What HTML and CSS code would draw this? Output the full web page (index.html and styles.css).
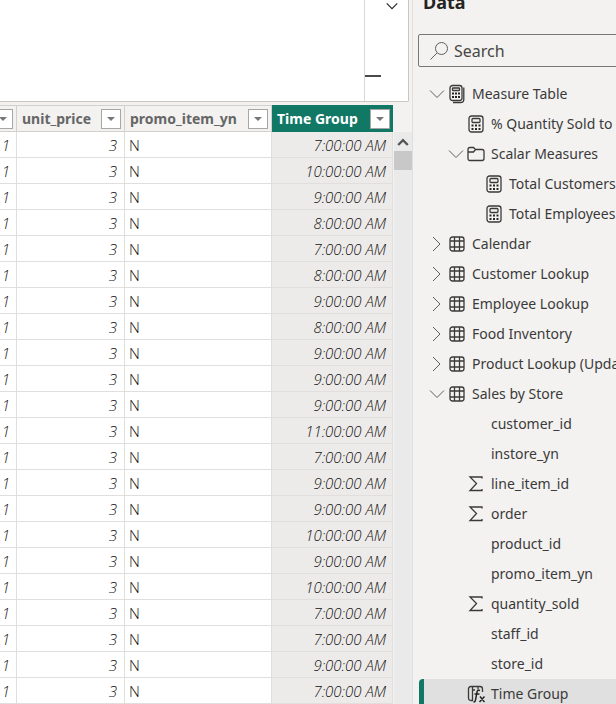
FILE: index.html
```html
<!DOCTYPE html>
<html lang="en">
<head>
<meta charset="utf-8">
<title>Table view</title>
<link rel="stylesheet" href="styles.css">
</head>
<body>
<svg class="defs" aria-hidden="true">
  <symbol id="down" viewBox="0 0 16 16"><path d="M1 4.500L8 11.500L15 4.500"/></symbol>
  <symbol id="right" viewBox="0 0 16 16"><path d="M4 1L11 8L4 15"/></symbol>
  <symbol id="table" viewBox="0 0 18 18"><rect x="2" y="2" width="14" height="14" rx="2.500"/><path d="M6.500 2V16M11.500 2V16M2 6H16M2 12H16"/></symbol>
  <symbol id="calc" viewBox="0 0 18 18"><rect x="2" y="1" width="14" height="16" rx="2.500"/><rect x="5" y="3.500" width="8" height="4" rx="1"/><path class="dots" d="M4.500 9.500h2v2h-2zM8 9.500h2v2H8zM11.500 9.500h2v2h-2zM4.500 13h2v2h-2zM8 13h2v2H8zM11.500 13h2v2h-2z"/></symbol>
  <symbol id="measures" viewBox="0 0 18 20"><rect x="2" y="1.500" width="12" height="15" rx="2.500"/><rect x="4.500" y="4" width="7" height="2.500" rx=".5"/><path class="dots" d="M4 8.500h2v2H4zM7 8.500h2v2H7zM10 8.500h2v2h-2zM4 12h2v2H4zM7 12h2v2H7zM10 12h2v2h-2z"/><path d="M15.800 3.500V15.500Q15.800 18.500 12.500 18.500H5"/></symbol>
  <symbol id="folder" viewBox="0 0 18 18"><path d="M1 4.500Q1 2.500 3 2.500H6.500L8.500 4.500H15Q17 4.500 17 6.500V13.500Q17 15.500 15 15.500H3Q1 15.500 1 13.500zM1 7H6.500L8.500 4.500"/></symbol>
  <symbol id="sum" viewBox="0 0 18 18"><path d="M15 3.500V2H3L9.500 8.500L3 15.500H15V14"/></symbol>
  <symbol id="column-fx" viewBox="0 0 18 18"><path d="M6 15.500H4Q1.500 15.500 1.500 13V4Q1.500 1.500 4 1.500H13Q15.500 1.500 15.500 4V7M5.500 1.500V15.500M11 1.500V4.500M5.500 5H8"/><path class="fx" d="M13 5.500Q10.500 4.500 10 7L8.500 15Q8.200 17.300 6.500 16.500M7.500 9H12.500M13 11.500L17.500 17M17.500 11.500L12.500 17"/></symbol>
</svg>
<div class="app">
  <main class="editor">
    <section class="formula">
      <textarea class="formula-input" aria-label="Formula"></textarea>
      <div class="formula-tools">
        <button class="expand" aria-label="Expand formula bar"><svg><use href="#down"/></svg></button>
        <span class="overview-mark"></span>
      </div>
    </section>
    <section class="grid">
      <table class="data">
        <colgroup><col class="c-first"><col class="c-price"><col class="c-promo"><col class="c-time"></colgroup>
        <thead><tr>
          <th><div class="head"><button aria-label="Filter column"></button></div></th>
          <th><div class="head"><span>unit_price</span><button aria-label="Filter unit_price"></button></div></th>
          <th><div class="head"><span>promo_item_yn</span><button aria-label="Filter promo_item_yn"></button></div></th>
          <th class="active"><div class="head"><span>Time Group</span><button aria-label="Filter Time Group"></button></div></th>
        </tr></thead>
        <tbody>
          <tr><td>1</td><td>3</td><td>N</td><td>7:00:00 AM</td></tr>
          <tr><td>1</td><td>3</td><td>N</td><td>10:00:00 AM</td></tr>
          <tr><td>1</td><td>3</td><td>N</td><td>9:00:00 AM</td></tr>
          <tr><td>1</td><td>3</td><td>N</td><td>8:00:00 AM</td></tr>
          <tr><td>1</td><td>3</td><td>N</td><td>7:00:00 AM</td></tr>
          <tr><td>1</td><td>3</td><td>N</td><td>8:00:00 AM</td></tr>
          <tr><td>1</td><td>3</td><td>N</td><td>9:00:00 AM</td></tr>
          <tr><td>1</td><td>3</td><td>N</td><td>8:00:00 AM</td></tr>
          <tr><td>1</td><td>3</td><td>N</td><td>9:00:00 AM</td></tr>
          <tr><td>1</td><td>3</td><td>N</td><td>9:00:00 AM</td></tr>
          <tr><td>1</td><td>3</td><td>N</td><td>9:00:00 AM</td></tr>
          <tr><td>1</td><td>3</td><td>N</td><td>11:00:00 AM</td></tr>
          <tr><td>1</td><td>3</td><td>N</td><td>7:00:00 AM</td></tr>
          <tr><td>1</td><td>3</td><td>N</td><td>9:00:00 AM</td></tr>
          <tr><td>1</td><td>3</td><td>N</td><td>9:00:00 AM</td></tr>
          <tr><td>1</td><td>3</td><td>N</td><td>10:00:00 AM</td></tr>
          <tr><td>1</td><td>3</td><td>N</td><td>9:00:00 AM</td></tr>
          <tr><td>1</td><td>3</td><td>N</td><td>10:00:00 AM</td></tr>
          <tr><td>1</td><td>3</td><td>N</td><td>7:00:00 AM</td></tr>
          <tr><td>1</td><td>3</td><td>N</td><td>7:00:00 AM</td></tr>
          <tr><td>1</td><td>3</td><td>N</td><td>9:00:00 AM</td></tr>
          <tr><td>1</td><td>3</td><td>N</td><td>7:00:00 AM</td></tr>
        </tbody>
      </table>
      <div class="scrollbar">
        <button aria-label="Scroll up"><svg viewBox="0 0 10 8"><path d="M1 6.500L5 2.500L9 6.500"/></svg></button>
        <span class="thumb"></span>
      </div>
    </section>
  </main>
  <aside class="pane">
    <h2>Data</h2>
    <label class="search">
      <svg viewBox="0 0 20 20"><circle cx="12.500" cy="7.500" r="6"/><path d="M8 12L1.500 18.500"/></svg>
      <input type="text" placeholder="Search" aria-label="Search">
    </label>
    <nav class="tree" aria-label="Fields">
      <button class="row"><svg class="chev"><use href="#down"/></svg><svg class="icon tall"><use href="#measures"/></svg><span>Measure Table</span></button>
      <button class="row l2"><svg class="chev"></svg><svg class="icon"><use href="#calc"/></svg><span>% Quantity Sold to</span></button>
      <button class="row l2"><svg class="chev"><use href="#down"/></svg><svg class="icon"><use href="#folder"/></svg><span>Scalar Measures</span></button>
      <button class="row l3"><svg class="chev"></svg><svg class="icon"><use href="#calc"/></svg><span>Total Customers</span></button>
      <button class="row l3"><svg class="chev"></svg><svg class="icon"><use href="#calc"/></svg><span>Total Employees</span></button>
      <button class="row"><svg class="chev"><use href="#right"/></svg><svg class="icon"><use href="#table"/></svg><span>Calendar</span></button>
      <button class="row"><svg class="chev"><use href="#right"/></svg><svg class="icon"><use href="#table"/></svg><span>Customer Lookup</span></button>
      <button class="row"><svg class="chev"><use href="#right"/></svg><svg class="icon"><use href="#table"/></svg><span>Employee Lookup</span></button>
      <button class="row"><svg class="chev"><use href="#right"/></svg><svg class="icon"><use href="#table"/></svg><span>Food Inventory</span></button>
      <button class="row"><svg class="chev"><use href="#right"/></svg><svg class="icon"><use href="#table"/></svg><span>Product Lookup (Upda</span></button>
      <button class="row"><svg class="chev"><use href="#down"/></svg><svg class="icon"><use href="#table"/></svg><span>Sales by Store</span></button>
      <button class="row l2"><svg class="chev"></svg><svg class="icon"></svg><span>customer_id</span></button>
      <button class="row l2"><svg class="chev"></svg><svg class="icon"></svg><span>instore_yn</span></button>
      <button class="row l2"><svg class="chev"></svg><svg class="icon"><use href="#sum"/></svg><span>line_item_id</span></button>
      <button class="row l2"><svg class="chev"></svg><svg class="icon"><use href="#sum"/></svg><span>order</span></button>
      <button class="row l2"><svg class="chev"></svg><svg class="icon"></svg><span>product_id</span></button>
      <button class="row l2"><svg class="chev"></svg><svg class="icon"></svg><span>promo_item_yn</span></button>
      <button class="row l2"><svg class="chev"></svg><svg class="icon"><use href="#sum"/></svg><span>quantity_sold</span></button>
      <button class="row l2"><svg class="chev"></svg><svg class="icon"></svg><span>staff_id</span></button>
      <button class="row l2"><svg class="chev"></svg><svg class="icon"></svg><span>store_id</span></button>
      <button class="row l2 selected"><svg class="chev"></svg><svg class="icon"><use href="#column-fx"/></svg><span>Time Group</span></button>
    </nav>
  </aside>
</div>
</body>
</html>
```
FILE: styles.css
```css
* { box-sizing: border-box; }
body { margin: 0; background: #f3f2f1; color: #3b3a39; font: 14px/20px "Noto Sans", "Open Sans", sans-serif; overflow: hidden; }
button { border: 0; padding: 0; background: none; font: inherit; color: inherit; }
svg { display: block; fill: none; stroke: #3b3a39; }
.defs { position: absolute; width: 0; height: 0; }
.dots { fill: #252423; stroke: none; }
.fx { stroke: #252423; stroke-width: 1.5; }

.app { display: grid; grid-template-columns: minmax(0, 1fr) 204px; height: 100vh; }
.editor { display: flex; flex-direction: column; min-width: 0; overflow: hidden; }

.formula { display: flex; flex: 0 0 102px; margin-right: 3px; background: #fff; border: solid #c8c6c4; border-width: 0 1px 1px 0; border-radius: 0 0 2px 0; }
.formula-input { flex: 1; min-width: 0; border: 0; resize: none; outline: 0; background: #fff; }
.formula-tools { display: flex; flex-direction: column; justify-content: space-between; width: 44px; padding-bottom: 24px; border-left: 1px solid #d8d8d8; }
.expand { align-self: flex-end; width: 32px; height: 12px; }
.expand svg { width: 14px; height: 12px; margin-left: 9px; stroke: #252423; stroke-width: 1.5; }
.overview-mark { width: 16px; height: 2px; background: #4a4a4a; }

.grid { display: grid; grid-template-columns: minmax(0, 1fr) 18px; column-gap: 1px; flex: 1; margin-top: 3px; min-height: 0; }
.data { width: 100%; height: max-content; table-layout: fixed; border-collapse: separate; border-spacing: 0; background: #fff; }
.c-first { width: 17px; }
.c-price { width: 108px; }
.c-time { width: 121px; }
th { height: 27px; padding: 0; background: #f3f2f1; border: solid #d2d0ce; border-width: 1px 1px 1px 0; color: #666; font-weight: 700; text-align: left; overflow: hidden; }
th.active { background: #117865; border-color: #117865; color: #fff; }
.head { display: flex; align-items: center; justify-content: flex-end; height: 25px; padding: 0 3px 0 5px; white-space: nowrap; }
.active .head { padding-right: 2px; }
.head span { flex: 1; min-width: 0; }
.head button { display: grid; place-items: center; flex: 0 0 20px; height: 20px; background: #fff; border: 1px solid #a6a6a6; }
.head button::before { content: ""; border: solid transparent; border-width: 4px 4px 0; border-top-color: #777; }
td { height: 26px; padding: 1px 7px 0 4px; border: solid #e1dfdd; border-width: 0 1px 1px 0; font: italic 300 15px/24px "Open Sans", "Noto Sans", sans-serif; color: #111; text-align: right; white-space: nowrap; }
td:first-child { padding-left: 0; padding-right: 6px; }
td:nth-child(3) { font-style: normal; text-align: left; }
td:nth-child(4) { background: #edebe9; padding-right: 6px; }

.scrollbar { margin-top: 27px; background: #eaeaea; }
.scrollbar button { display: grid; place-items: center; width: 100%; height: 19px; }
.scrollbar svg { width: 12px; height: 10px; stroke: #555; stroke-width: 2; }
.thumb { display: block; height: 19px; background: #c8c8c8; }

.pane { min-width: 0; padding-left: 5px; border-left: 1px solid #e1dfdd; overflow: hidden; }
h2 { margin: -10px 0 0 5px; font-size: 18px; line-height: 24px; font-weight: 700; color: #252423; }
.search { display: flex; align-items: center; height: 33px; margin: 20px -8px 12px 0; padding-left: 10px; border: 1px solid #797775; border-radius: 2px; }
.search svg { flex: 0 0 20px; height: 20px; stroke: #605e5c; }
.search input { flex: 1; min-width: 0; margin-left: 5px; padding: 1px 0 0; border: 0; outline: 0; background: none; font: inherit; font-size: 16px; }
.search input::placeholder { color: #484644; opacity: 1; }
.tree { margin-left: 1px; }
.row { display: flex; align-items: center; width: 100%; height: 30px; padding-left: 10px; white-space: nowrap; text-align: left; overflow: hidden; }
.l2 { padding-left: 29px; }
.l3 { padding-left: 47px; }
.chev { flex: 0 0 16px; height: 16px; margin-right: 3px; stroke: #605e5c; }
.icon { flex: 0 0 18px; height: 18px; margin-right: 6px; stroke-width: 1.3; }
.tall { height: 20px; }
.selected { padding-left: 24px; border-left: 5px solid #117865; border-radius: 4px 0 0 0; background: #e0e0e0; }
```
